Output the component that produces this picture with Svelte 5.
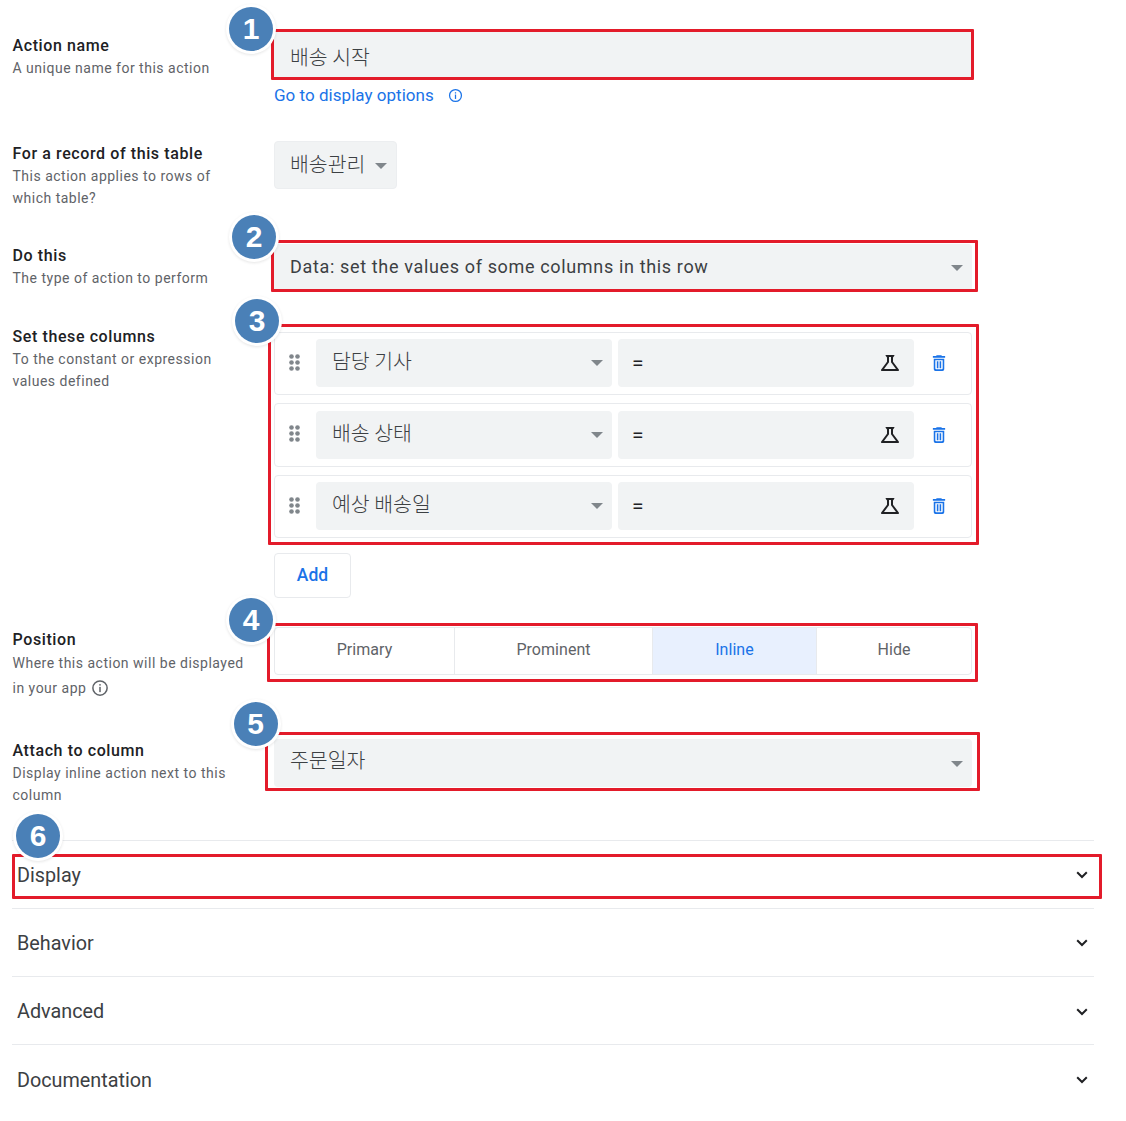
<script>
  const setColumns = ['담당 기사', '배송 상태', '예상 배송일'];
  const positions = ['Primary', 'Prominent', 'Inline', 'Hide'];
  const sections = ['Display', 'Behavior', 'Advanced', 'Documentation'];
  const frames = ['f1', 'f2', 'f3', 'f4', 'f5', 'f6'];
</script>

{#snippet caret()}
  <span class="caret"></span>
{/snippet}

{#snippet info(cls)}
  <svg class={cls} viewBox="0 0 24 24" aria-hidden="true">
    <circle cx="12" cy="12" r="9.5" fill="none" stroke="currentColor" stroke-width="2" />
    <rect x="11" y="10.5" width="2" height="7" fill="currentColor" />
    <rect x="11" y="6.8" width="2" height="2" fill="currentColor" />
  </svg>
{/snippet}

<main class="page">
  <section class="row first">
    <div class="label">
      <h3>Action name</h3>
      <p>A unique name for this action</p>
    </div>
    <div class="control">
      <div class="field ko name-field">배송 시작</div>
      <div class="link-line">
        <span class="link">Go to display options</span>
        {@render info('link-info')}
      </div>
    </div>
  </section>

  <section class="row table-row">
    <div class="label">
      <h3>For a record of this table</h3>
      <p>This action applies to rows of which table?</p>
    </div>
    <div class="control">
      <div class="field ko small-select">배송관리 {@render caret()}</div>
    </div>
  </section>

  <section class="row do-row">
    <div class="label">
      <h3>Do this</h3>
      <p>The type of action to perform</p>
    </div>
    <div class="control">
      <div class="field latin">Data: set the values of some columns in this row {@render caret()}</div>
    </div>
  </section>

  <section class="row set-row">
    <div class="label">
      <h3>Set these columns</h3>
      <p>To the constant or expression values defined</p>
    </div>
    <div class="control cards">
      {#each setColumns as col}
        <div class="card">
          <svg class="drag" viewBox="0 0 11 17" aria-hidden="true">
            {#each [2.5, 8.5, 14.5] as cy}
              <circle cx="2.5" {cy} r="2.3" />
              <circle cx="8.5" {cy} r="2.3" />
            {/each}
          </svg>
          <div class="field ko col-select">{col} {@render caret()}</div>
          <div class="field expr">
            <span class="eq">=</span>
            <svg class="flask" viewBox="0 0 24 24" aria-hidden="true">
              <path d="M13 11.33 18 18H6l5-6.67V6h2M15.96 4H8.04c-.42 0-.65.48-.39.81L9 6.5v4.17L3.2 18.4c-.49.66-.02 1.6.8 1.6h16c.82 0 1.29-.94.8-1.6L15 10.67V6.5l1.35-1.69c.26-.33.03-.81-.39-.81z" />
            </svg>
          </div>
          <svg class="trash" viewBox="0 0 16 18" aria-hidden="true">
            <path d="M5.500 0h5l1 1H15v2H1V1h3.500zM2 4h12v12a2 2 0 0 1-2 2H4a2 2 0 0 1-2-2zm1.800 1.800V15a1.200 1.200 0 0 0 1.200 1.200h6a1.200 1.200 0 0 0 1.200-1.200V5.800z" fill-rule="evenodd" />
            <rect x="5.500" y="7" width="1.800" height="8" />
            <rect x="8.700" y="7" width="1.800" height="8" />
          </svg>
        </div>
      {/each}
      <button class="add">Add</button>
    </div>
  </section>

  <section class="row position-row">
    <div class="label">
      <h3>Position</h3>
      <p class="position-sub">Where this action will be displayed in your app {@render info('help')}</p>
    </div>
    <div class="control">
      <div class="segments">
        {#each positions as pos}
          <div class="segment" class:active={pos === 'Inline'}>{pos}</div>
        {/each}
      </div>
    </div>
  </section>

  <section class="row attach-row">
    <div class="label">
      <h3>Attach to column</h3>
      <p>Display inline action next to this column</p>
    </div>
    <div class="control">
      <div class="field ko attach-field">주문일자 {@render caret()}</div>
    </div>
  </section>

  <section class="accordion">
    {#each sections as name}
      <div class="acc-item">
        <span>{name}</span>
        <svg class="chevron" viewBox="0 0 12 8" aria-hidden="true">
          <path d="M1.200 1.300 6 6l4.800-4.700" />
        </svg>
      </div>
    {/each}
  </section>

  {#each frames as f}
    <div class="frame {f}"></div>
  {/each}
  {#each frames as f, i}
    <div class="badge b{i + 1}">{i + 1}</div>
  {/each}
</main>

<style>
  :global(body) {
    background: #fff;
  }

  .page {
    position: relative;
    box-sizing: border-box;
    width: 1126px;
    min-height: 1121px;
    padding: 31px 32px 0 12px;
    font-family: Roboto, "Noto Sans CJK KR", sans-serif;
    color: #3c4043;
    overflow: hidden;
  }

  .row {
    display: grid;
    grid-template-columns: 262px 698px;
    align-items: start;
  }

  .label {
    padding-left: 0.5px;
  }

  .first {
    margin-bottom: 34px;
  }

  .first .label {
    padding-top: 3px;
  }

  .table-row {
    margin-bottom: 35px;
  }

  .table-row .label {
    padding-top: 1px;
  }

  .do-row {
    margin-bottom: 33px;
  }

  .set-row {
    margin-bottom: 29px;
  }

  .position-row {
    margin-bottom: 38px;
  }

  .position-row .label {
    padding-top: 1px;
  }

  .attach-row {
    margin-bottom: 34px;
  }

  .label h3 {
    margin: 0 0 -1px;
    font-size: 16px;
    line-height: 24px;
    font-weight: 500;
    letter-spacing: 0.6px;
    color: #202124;
  }

  .label p {
    margin: 0;
    width: 240px;
    font-size: 14px;
    line-height: 22px;
    letter-spacing: 0.5px;
    color: #5f6368;
  }

  .label .position-sub {
    margin-top: -1px;
    line-height: 25px;
  }

  .field {
    box-sizing: border-box;
    position: relative;
    display: flex;
    align-items: center;
    height: 48px;
    padding: 0 16px;
    background: #f1f3f4;
    border-radius: 4px;
    color: #5f6368;
  }

  .ko {
    font-family: "Noto Sans CJK KR", sans-serif;
    font-size: 20.500px;
    font-weight: 300;
    padding-bottom: 6px;
    color: #3c4043;
  }

  .name-field {
    padding-top: 2px;
    padding-bottom: 0;
  }

  .attach-field {
    padding-bottom: 8px;
  }

  .attach-field .caret {
    top: 22px;
  }

  .latin {
    font-size: 18px;
    letter-spacing: 0.65px;
    padding-bottom: 4px;
    color: #3c4043;
  }

  .small-select {
    width: 123px;
    border: 1px solid #eceef0;
    padding-left: 15px;
    padding-bottom: 4px;
  }

  .caret {
    position: absolute;
    right: 9px;
    top: 21px;
    width: 0;
    height: 0;
    border-left: 6px solid transparent;
    border-right: 6px solid transparent;
    border-top: 6px solid #80868b;
  }

  .link-line {
    display: flex;
    align-items: center;
    gap: 14px;
    height: 24px;
    margin-top: 4px;
    color: #1a73e8;
  }

  .link {
    font-size: 17px;
    font-weight: 400;
    letter-spacing: 0.03px;
  }

  .link-info {
    width: 15px;
    height: 15px;
  }

  .help {
    width: 18px;
    height: 18px;
    margin-left: 1px;
    vertical-align: -4px;
    color: #5f6368;
  }

  .set-row .cards {
    padding-top: 6.500px;
    display: flex;
    flex-direction: column;
    gap: 8px;
  }

  .card {
    box-sizing: border-box;
    display: flex;
    align-items: center;
    height: 63.500px;
    padding-left: 14px;
    border: 1px solid #e8eaed;
    border-radius: 4px;
  }

  .drag {
    width: 11px;
    height: 17px;
    margin-top: -2px;
    margin-right: 16px;
    fill: #80868b;
    flex: none;
  }

  .col-select {
    width: 296px;
    flex: none;
  }

  .expr {
    width: 296px;
    flex: none;
    margin-left: 6px;
    justify-content: space-between;
    padding: 0 12px 0 14px;
  }

  .eq {
    font-size: 21px;
    color: #202124;
  }

  .flask {
    width: 24px;
    height: 24px;
    fill: #202124;
  }

  .trash {
    width: 14px;
    height: 16px;
    margin-left: 18px;
    fill: #1a73e8;
    flex: none;
  }

  .add {
    width: 77px;
    height: 45px;
    margin-top: 6.500px;
    padding: 0;
    background: #fff;
    border: 1px solid #e8eaed;
    border-radius: 4px;
    font-family: inherit;
    font-size: 17.500px;
    font-weight: 500;
    color: #1a73e8;
  }

  .segments {
    box-sizing: border-box;
    display: grid;
    grid-template-columns: 180px 198px 164px 1fr;
    height: 48px;
    border: 1px solid #e8eaed;
    border-radius: 4px;
    overflow: hidden;
  }

  .segment {
    display: flex;
    align-items: center;
    justify-content: center;
    padding-bottom: 2px;
    font-size: 16px;
    letter-spacing: 0.05px;
    color: #5f6368;
    border-right: 1px solid #e8eaed;
  }

  .segment:last-child {
    border-right: none;
  }

  .segment.active {
    background: #e8f0fe;
    color: #1a73e8;
  }

  .accordion {
    width: 1082px;
  }

  .acc-item {
    box-sizing: border-box;
    display: flex;
    align-items: center;
    justify-content: space-between;
    height: 68.330px;
    padding: 2px 6px 0 5px;
    border-top: 1px solid #e8eaed;
    font-size: 19.800px;
    color: #3c4043;
  }

  .chevron {
    width: 12px;
    height: 8px;
    fill: none;
    stroke: #202124;
    stroke-width: 2;
  }

  .frame {
    position: absolute;
    box-sizing: border-box;
    border: 3px solid #e31b2a;
    border-radius: 1px;
  }

  .f1 { left: 271px; top: 29px; width: 703px; height: 51px; }
  .f2 { left: 271px; top: 240px; width: 707px; height: 52px; }
  .f3 { left: 268px; top: 324px; width: 711px; height: 221px; }
  .f4 { left: 267px; top: 623px; width: 711px; height: 59px; }
  .f5 { left: 265px; top: 732px; width: 715px; height: 59px; }
  .f6 { left: 12px; top: 854px; width: 1090px; height: 45px; }

  .badge {
    position: absolute;
    width: 44px;
    height: 44px;
    display: flex;
    align-items: center;
    justify-content: center;
    background: #4a80b7;
    border-radius: 50%;
    box-shadow: 0 0 0 3px #fff, 0 1px 3px 3px rgba(0, 0, 0, 0.1);
    color: #fff;
    font-family: "Liberation Sans", sans-serif;
    font-size: 30px;
    font-weight: 700;
  }

  .b1 { left: 229px; top: 7px; }
  .b2 { left: 232px; top: 215px; }
  .b3 { left: 235px; top: 299px; }
  .b4 { left: 229px; top: 598px; }
  .b5 { left: 233.500px; top: 702px; }
  .b6 { left: 16px; top: 814px; }
</style>
